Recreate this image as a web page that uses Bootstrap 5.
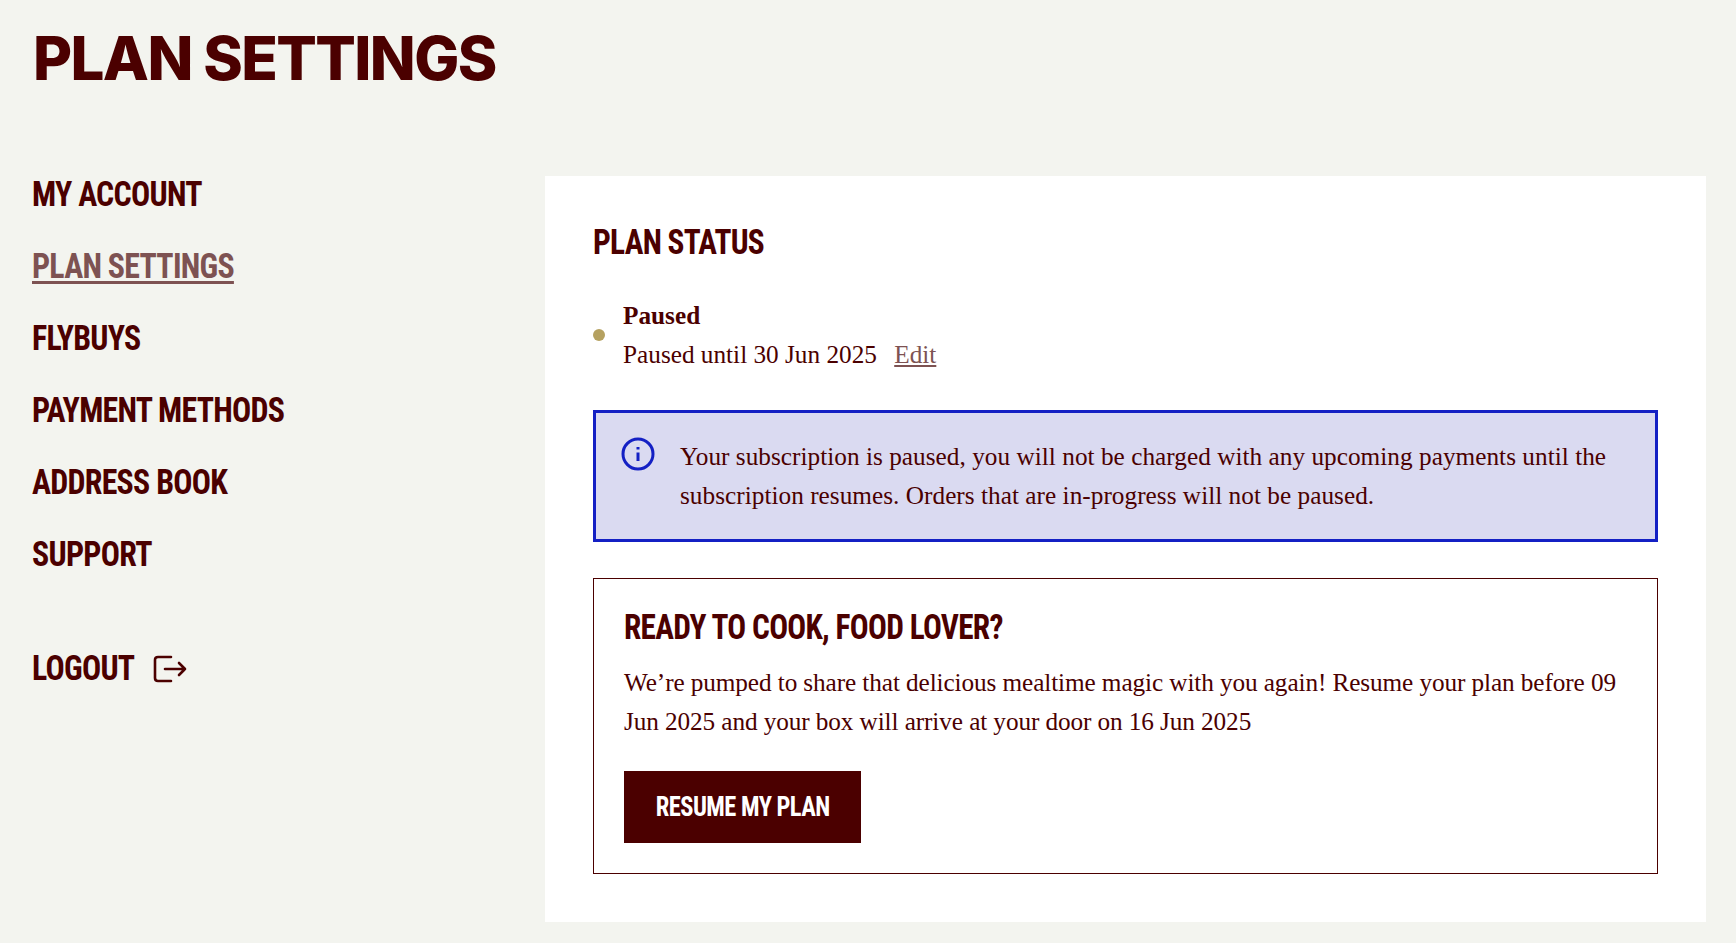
<!DOCTYPE html>
<html lang="en">
<head>
    <meta charset="UTF-8">
    <meta name="viewport" content="width=device-width, initial-scale=1.0">
    <title>Plan Settings</title>
    <link href="https://cdn.jsdelivr.net/npm/bootstrap@5.3.0/dist/css/bootstrap.min.css" rel="stylesheet">
    <script src="https://cdn.jsdelivr.net/npm/bootstrap@5.3.0/dist/js/bootstrap.bundle.min.js"></script>
    <style>
        body { background: #f3f4ef; color: #4b0000; font-family: "Liberation Serif", serif; font-size: 25.25px; line-height: 39px; height: 943px; overflow: hidden; }
        .page-title { font-family: Inter, sans-serif; font-weight: 800; font-size: 60px; letter-spacing: -1.6px; line-height: 60px; margin: 28px 0 0; padding-left: 33px; height: 147px; }
        .side-col { width: 545px; padding: 0 0 0 32px; flex: none; }
        .cond { font-family: Roboto, sans-serif; font-stretch: 75%; font-weight: 700; font-size: 35px; line-height: 40px; }
        .narrow-txt { display: inline-block; letter-spacing: -.8px; transform: scaleX(.91); transform-origin: left center; white-space: nowrap; }
        .side-link { display: block; color: #4b0000; text-decoration: none; margin-bottom: 32px; }
        .side-link.active-link { color: #7d5252; }
        .active-link .narrow-txt { text-decoration: underline; text-decoration-thickness: 2.5px; text-underline-offset: 3px; }
        .logout-link { display: flex; align-items: center; gap: 8px; margin-top: 74px; color: #4b0000; text-decoration: none; }
        .main-panel { width: 1161px; height: 746px; background: #fff; margin-top: 1px; padding: 47px 48px 0; }
        .main-panel h2 .narrow-txt, .cook-box h3 .narrow-txt { transform: scaleX(.895); }
        .status-col { margin-top: 33px; }
        .status-dot { width: 12px; height: 12px; border-radius: 50%; background: #b5a160; flex: none; }
        .status-text { margin-left: 2px; }
        .edit-link { color: #7d5252; margin-left: 11px; }
        .info-box { background: #dadaf1; border: 3px solid #1420c4; padding: 24px 25px; height: 132px; gap: 25px; margin-top: 36px; }
        .info-box > div { letter-spacing: .03px; }
        .cook-box { border: 1px solid #4b0000; height: 296px; margin-top: 36px; padding: 29px 30px; }
        .cook-box h3 { margin-bottom: 15px; }
        .cook-box p { letter-spacing: -.1px; }
        .resume-btn { background: #4b0000; color: #fff; border-radius: 0; border: 0; width: 237px; height: 72px; font-size: 27.5px; padding: 0; margin-top: 6px; }
        .resume-btn .narrow-txt { transform: scaleX(.89); transform-origin: center; letter-spacing: -.6px; }
    </style>
</head>
<body>
    <h1 class="page-title">PLAN SETTINGS</h1>
    <div class="d-flex">
        <nav class="side-col cond">
            <a class="side-link" href="#"><span class="narrow-txt">MY ACCOUNT</span></a>
            <a class="side-link active-link" href="#"><span class="narrow-txt">PLAN SETTINGS</span></a>
            <a class="side-link" href="#"><span class="narrow-txt">FLYBUYS</span></a>
            <a class="side-link" href="#"><span class="narrow-txt">PAYMENT METHODS</span></a>
            <a class="side-link" href="#"><span class="narrow-txt">ADDRESS BOOK</span></a>
            <a class="side-link" href="#"><span class="narrow-txt">SUPPORT</span></a>
            <a class="logout-link" href="#"><span class="narrow-txt">LOGOUT</span>
                <svg width="34" height="28" viewBox="0 0 34 28" fill="none" stroke="#4b0000" stroke-width="2.6" stroke-linecap="round" stroke-linejoin="round"><path d="M18 2H5Q2 2 2 5V23Q2 26 5 26H18"/><path d="M12 14H32M26 8l6 6-6 6"/></svg>
            </a>
        </nav>
        <main class="main-panel">
            <h2 class="cond mb-0"><span class="narrow-txt">PLAN STATUS</span></h2>
            <div class="d-flex align-items-center gap-3 status-col">
                <span class="status-dot"></span>
                <div class="status-text">
                    <div class="fw-bold">Paused</div>
                    <div>Paused until 30 Jun 2025 <a class="edit-link" href="#">Edit</a></div>
                </div>
            </div>
            <div class="info-box d-flex">
                <svg class="flex-shrink-0" width="34" height="34" viewBox="0 0 34 34" fill="none" stroke="#1420c4" stroke-width="3"><circle cx="17" cy="17" r="15"/><path d="M17 15.5V24M17 10v2.5"/></svg>
                <div>Your subscription is paused, you will not be charged with any upcoming payments until the subscription resumes. Orders that are in-progress will not be paused.</div>
            </div>
            <div class="cook-box">
                <h3 class="cond"><span class="narrow-txt">READY TO COOK, FOOD LOVER?</span></h3>
                <p class="mb-4">We’re pumped to share that delicious mealtime magic with you again! Resume your plan before 09 Jun 2025 and your box will arrive at your door on 16 Jun 2025</p>
                <button class="btn resume-btn cond"><span class="narrow-txt">RESUME MY PLAN</span></button>
            </div>
        </main>
    </div>
</body>
</html>
